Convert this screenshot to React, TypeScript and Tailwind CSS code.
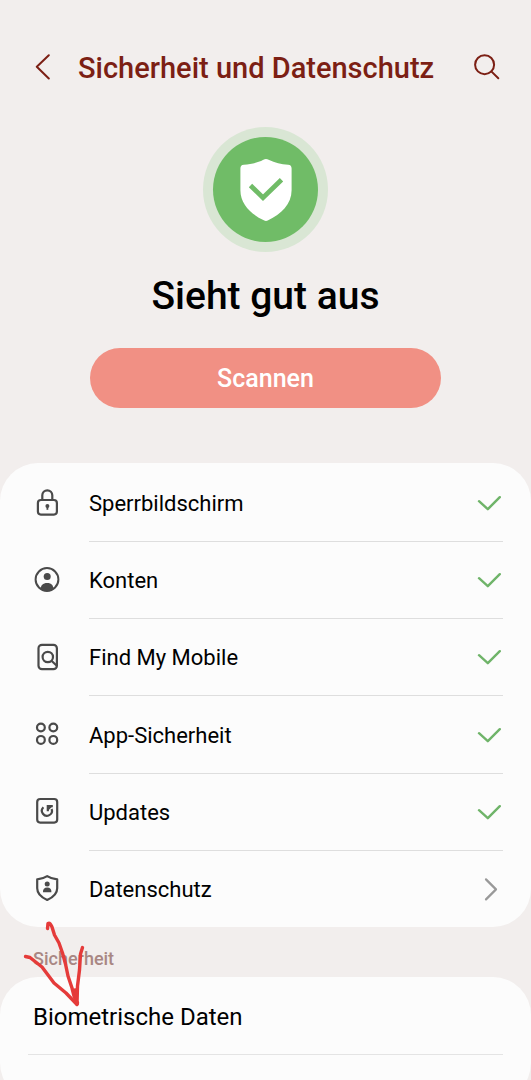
import type { ReactNode } from "react"

interface MenuItem {
    label: string,
    icon: ReactNode,
    status: "ok" | "link"
}

const CheckIcon = () => (
    <svg className="w-6 h-4" viewBox="0 0 24 16" fill="none" stroke="#6fb469" strokeWidth="2.4" strokeLinecap="round" strokeLinejoin="round" aria-hidden="true">
        <path d="M2 6.2 10.8 14.2 22.8 2.2" />
    </svg>
)

const ChevronRightIcon = () => (
    <svg className="w-6 h-6" viewBox="0 0 24 24" fill="none" stroke="#999" strokeWidth="2.2" strokeLinecap="round" strokeLinejoin="round" aria-hidden="true">
        <path d="M9 2.4 19 12.4 9 22.4" />
    </svg>
)

const LockIcon = () => (
    <svg className="w-7 h-7" viewBox="0 0 28 28" fill="none" stroke="#4a4a4a" strokeWidth="2.2" aria-hidden="true">
        <rect x="4.9" y="11" width="19" height="14.6" rx="3" />
        <path d="M9.3 11V6.3a5 5 0 0 1 10 0V11" />
        <circle cx="14.4" cy="17" r="2" fill="#4a4a4a" stroke="none" />
        <path d="M14.4 17v3.8" strokeWidth="1.8" />
    </svg>
)

const AccountIcon = () => (
    <svg className="w-7 h-7" viewBox="0 0 28 28" fill="none" stroke="#4a4a4a" strokeWidth="2" aria-hidden="true">
        <circle cx="14" cy="13.5" r="11.4" />
        <circle cx="14.2" cy="10.6" r="3.5" fill="#4a4a4a" stroke="none" />
        <path d="M7.9 23c-.4-3.4 2-6 6.3-6s6.4 2.6 6 6c-3.6 2.8-8.7 2.8-12.3 0Z" fill="#4a4a4a" stroke="none" />
    </svg>
)

const FindIcon = () => (
    <svg className="w-7 h-7" viewBox="0 0 28 28" fill="none" stroke="#4a4a4a" strokeWidth="2.2" aria-hidden="true">
        <rect x="5.5" y="1.8" width="18.4" height="24.4" rx="3.5" />
        <circle cx="14.8" cy="14" r="5.2" />
        <path d="m18.5 17.7 5 4.8" />
    </svg>
)

const AppsIcon = () => (
    <svg className="w-7 h-7" viewBox="0 0 28 28" fill="none" stroke="#4a4a4a" strokeWidth="2.2" aria-hidden="true">
        <circle cx="7.9" cy="7.5" r="3.9" />
        <circle cx="20.3" cy="7.5" r="3.9" />
        <circle cx="7.9" cy="19.9" r="3.9" />
        <circle cx="20.3" cy="19.9" r="3.9" />
    </svg>
)

const UpdateIcon = () => (
    <svg className="w-7 h-7" viewBox="0 0 28 28" fill="none" stroke="#4a4a4a" strokeWidth="2.2" aria-hidden="true">
        <rect x="4.2" y="2" width="20" height="23.6" rx="3" />
        <path d="M10.4 10.2A5 5 0 1 0 18.6 12" />
        <path d="M14.8 14.2V9.2h5" />
        <path d="M15 13.8V9.3h4.5Z" fill="#4a4a4a" stroke="none" />
    </svg>
)

const PrivacyIcon = () => (
    <svg className="w-7 h-7" viewBox="0 0 28 28" fill="none" stroke="#4a4a4a" strokeWidth="2.2" strokeLinejoin="round" aria-hidden="true">
        <path d="M14.2 2.2c3 2 6.3 2.9 10 3.2v8.8c0 5.4-4.500 9.3-10 11.7-5.500-2.400-10-6.300-10-11.700V5.400c3.700-.3 7-1.200 10-3.200Z" />
        <circle cx="14.2" cy="10" r="2.5" fill="#4a4a4a" stroke="none" />
        <path d="M10 18.2c-.3-3 1.400-4.700 4.200-4.700s4.500 1.700 4.200 4.700Z" fill="#4a4a4a" stroke="none" />
    </svg>
)

const ShieldBadge = () => (
    <div className="mt-8 size-[125px] rounded-full bg-[#d9e6d4] p-[10px]">
        <div className="flex size-full items-center justify-center rounded-full bg-[#70bc67]">
            <svg className="w-[52px] h-16" viewBox="0 0 52 64" aria-hidden="true">
                <path d="M26 1c1 0 1.700.3 2.600.7 6.500 3.300 12.400 4.500 19.500 5 2.400.2 3.500 1.500 3.500 3.800v21.700c0 13.800-10.600 24-23.400 30.100-1.600.8-2.800.8-4.400 0C11 56.200.4 46 .4 32.200V10.500C.4 8.200 1.500 6.900 3.900 6.700c7.100-.5 13-1.700 19.500-5 .9-.4 1.600-.7 2.600-.7Z" fill="#fff" />
                <path d="M10.500 27.500 23 39.700 41.500 21.700" fill="none" stroke="#70bc67" strokeWidth="4.800" />
            </svg>
        </div>
    </div>
)

const HandDrawnArrow = () => (
    <svg className="pointer-events-none absolute left-5 -top-2 w-[68px] h-[90px]" viewBox="20 919 68 90" fill="none" stroke="#e53b3a" strokeWidth="3.4" strokeLinecap="round" strokeLinejoin="round" aria-hidden="true">
        <path d="M47.500 928.500 48 923.500C50 922.500 51 925 52 927L54.500 935 59 943 62.500 953 65.500 964 68 976 72 988 74 996 77 1004" />
        <path d="M25.500 956.500 30 957.500 42 967 48 975 54 983 66 993 77 1004.500" />
        <path d="M82.500 947.500 80.500 954 79.500 970 77.500 986 77 1004M75 990 77.500 1003" />
    </svg>
)

const menuItems: MenuItem[] = [
    { label: "Sperrbildschirm", icon: <LockIcon />, status: "ok" },
    { label: "Konten", icon: <AccountIcon />, status: "ok" },
    { label: "Find My Mobile", icon: <FindIcon />, status: "ok" },
    { label: "App-Sicherheit", icon: <AppsIcon />, status: "ok" },
    { label: "Updates", icon: <UpdateIcon />, status: "ok" },
    { label: "Datenschutz", icon: <PrivacyIcon />, status: "link" },
]

const MenuRow: React.FC<{ item: MenuItem }> = ({ item }) => (
    <li className="group flex">
        <button type="button" className="flex flex-1 gap-7 pl-[33px] pr-7 text-left">
            <span className="flex self-stretch items-center">{item.icon}</span>
            <span className="flex flex-1 self-stretch items-center justify-between border-t border-[#dedede] pr-0.5 group-first:border-transparent">
                <span className="pt-0.5 text-[22px] leading-7 text-black">{item.label}</span>
                {item.status === "ok" ? <CheckIcon /> : <ChevronRightIcon />}
            </span>
        </button>
    </li>
)

export default function App() {
    return (
        <div className="h-screen overflow-hidden bg-[#f2eeed] font-[Roboto,sans-serif]">
            <header className="flex items-center pt-[41px] pl-7 pr-7">
                <button type="button" aria-label="Zurück" className="flex h-[54px] w-[50px] items-center">
                    <svg className="w-7 h-7" viewBox="0 0 28 28" fill="none" stroke="#7c1f14" strokeWidth="2" strokeLinecap="round" strokeLinejoin="round" aria-hidden="true">
                        <path d="M20.8 1.2 8.8 12.7 20.8 24.5" />
                    </svg>
                </button>
                <h1 className="flex-1 whitespace-nowrap text-[29px] leading-9 font-medium text-[#7c1f14]">Sicherheit und Datenschutz</h1>
                <button type="button" aria-label="Suchen" className="flex h-[54px] items-center">
                    <svg className="w-8 h-7" viewBox="0 0 32 28" fill="none" stroke="#7c1f14" strokeWidth="2" strokeLinecap="round" aria-hidden="true">
                        <circle cx="13.6" cy="10.7" r="9.5" />
                        <path d="m20.3 17.4 7 6.8" />
                    </svg>
                </button>
            </header>

            <main>
                <section className="flex flex-col items-center">
                    <ShieldBadge />
                    <h2 className="mt-5 text-[39px] leading-12 font-medium text-black">Sieht gut aus</h2>
                    <button type="button" className="mt-7 h-[60px] w-[66%] rounded-full bg-[#f19084] pt-0.5 text-[25px] font-medium text-white">
                        Scannen
                    </button>
                </section>

                <ul className="mt-[55px] grid h-[464px] grid-rows-6 rounded-[38px] bg-[#fcfcfc] pt-px">
                    {menuItems.map((item) => (
                        <MenuRow key={item.label} item={item} />
                    ))}
                </ul>

                <div className="relative flex h-[50px] items-center pt-3.5 pl-[33px]">
                    <h3 className="text-lg font-medium text-[#a98783]">Sicherheit</h3>
                    <HandDrawnArrow />
                </div>

                <section className="h-[124px] rounded-[38px] bg-[#fcfcfc] px-7">
                    <button type="button" className="flex h-[78px] w-full items-center border-b border-[#e4e4e4] pl-[5px] pt-0.5 text-left text-[24px] leading-7 text-black">
                        Biometrische Daten
                    </button>
                </section>
            </main>
        </div>
    )
}
